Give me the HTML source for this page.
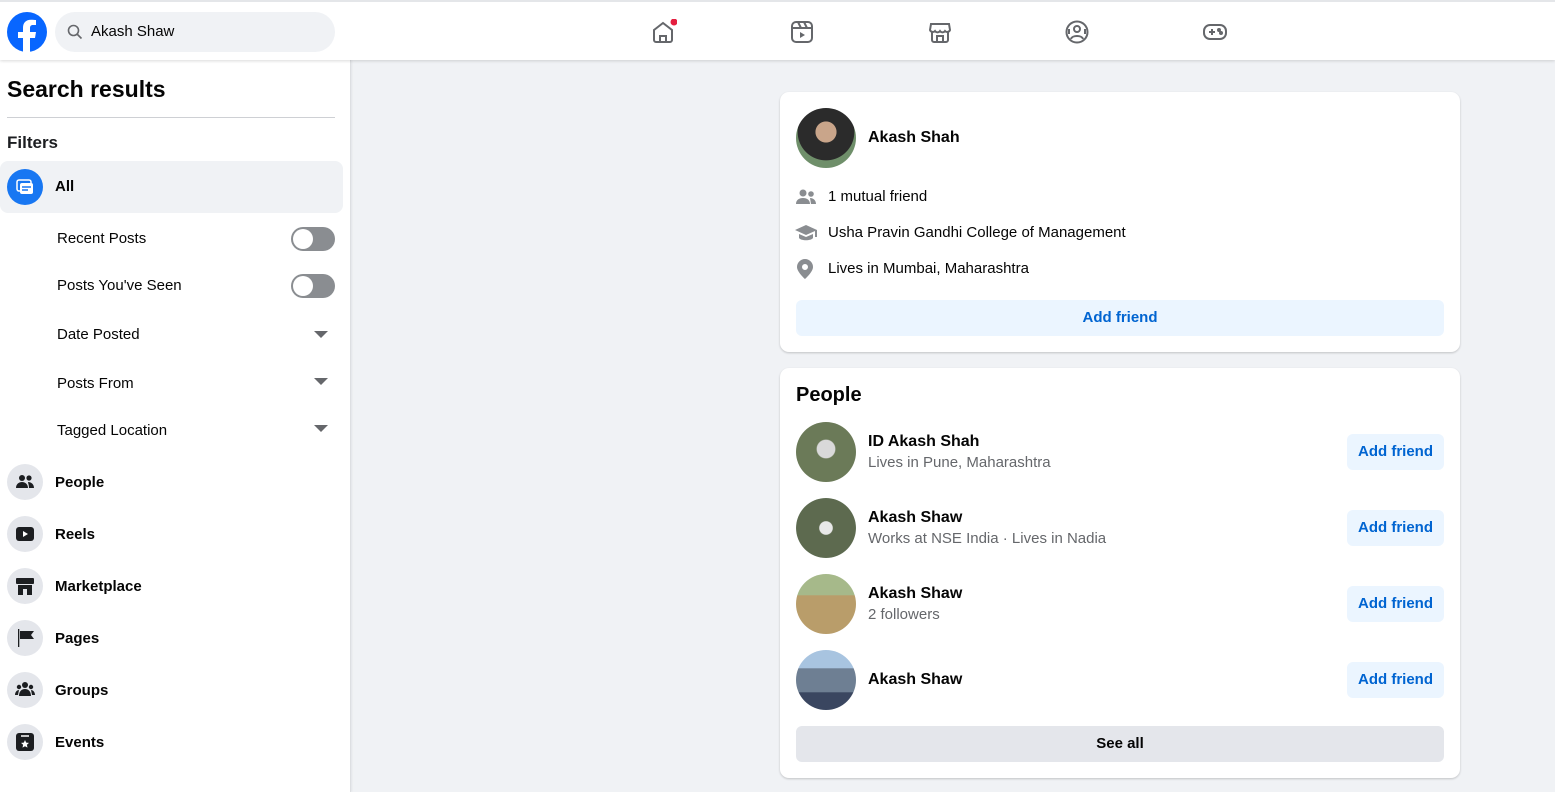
<!DOCTYPE html>
<html><head><meta charset="utf-8"><style>
*{box-sizing:border-box;margin:0;padding:0}
body{width:1555px;height:792px;overflow:hidden;background:#f0f2f5;font-family:"Liberation Sans",Arial,sans-serif;color:#050505;position:relative}
.hdr{position:absolute;left:0;top:0;width:1555px;height:60px;background:#fff;border-top:2px solid #e4e6e9;box-shadow:0 1px 3px rgba(0,0,0,.15);z-index:2}
.side{position:absolute;left:0;top:60px;width:351px;height:732px;background:#fff;border-right:1px solid #dddfe2;box-shadow:1px 0 2px rgba(0,0,0,.06)}
.abs{position:absolute}
.card{position:absolute;background:#fff;border-radius:9px;box-shadow:0 1px 2px rgba(0,0,0,.2)}
.circ{position:absolute;width:36px;height:36px;border-radius:50%;background:#e4e6eb;left:7px}
.lbl{position:absolute;left:55px;font-size:15px;font-weight:bold}
.flt{position:absolute;left:57px;font-size:15px}
.tog{position:absolute;left:291px;width:44px;height:24px;border-radius:12px;background:#8a8d91}
.tog::after{content:"";position:absolute;left:2px;top:2px;width:20px;height:20px;border-radius:50%;background:#fff}
.tri{position:absolute;left:314px;width:0;height:0;border-left:7px solid transparent;border-right:7px solid transparent;border-top:7px solid #65676b}
.btn{position:absolute;background:#ebf5ff;color:#0064d1;font-weight:bold;font-size:15px;border-radius:6px;text-align:center}
.av{position:absolute;width:60px;height:60px;border-radius:50%}
.nm{position:absolute;font-size:16px;font-weight:bold}
.sub{position:absolute;font-size:15px;color:#65676b}
</style></head><body>
<div class="hdr">
<svg class="abs" style="left:7px;top:10px" width="40" height="40" viewBox="0 0 40 40"><circle cx="20" cy="20" r="20" fill="#0866ff"/><path d="M23 40V26h5l1-6h-6v-4c0-2 1-3 3-3h3V8c-1 0-3-.3-5-.3-5 0-8 3-8 8V20h-5v6h5v14z" fill="#fff"/></svg>
<div class="abs" style="left:55px;top:10px;width:280px;height:40px;border-radius:20px;background:#f0f2f5"></div>
<svg class="abs" style="left:67px;top:22px" width="16" height="16" viewBox="0 0 16 16"><circle cx="6.5" cy="6.5" r="5" fill="none" stroke="#65676b" stroke-width="1.6"/><path d="M10 10l4.5 4.5" stroke="#65676b" stroke-width="1.6"/></svg>
<div class="abs" style="left:91px;top:21px;font-size:15px">Akash Shaw</div>
<svg class="abs" style="left:651px;top:17px" width="26" height="26" viewBox="0 0 26 26" fill="none" stroke="#65676b" stroke-width="2"><path d="M3 11L12 4l9 7v10a2 2 0 0 1-2 2H5a2 2 0 0 1-2-2z"/><path d="M9 23v-6h6v6"/><circle cx="23" cy="3" r="3.5" fill="#e41e3f" stroke="none"/></svg>
<svg class="abs" style="left:790px;top:18px" width="24" height="24" viewBox="0 0 24 24" fill="none" stroke="#65676b" stroke-width="2"><rect x="2" y="2" width="20" height="20" rx="4"/><path d="M2 8h20M8 2l3 6M14 2l3 6"/><path d="M10 12v6l5-3z" fill="#65676b" stroke="none"/></svg>
<svg class="abs" style="left:928px;top:18px" width="24" height="24" viewBox="0 0 24 24" fill="none" stroke="#65676b" stroke-width="2"><path d="M3 4h18l1 6a3 3 0 0 1-5 1 3 3 0 0 1-5 0 3 3 0 0 1-5 0 3 3 0 0 1-5-1z"/><path d="M4 12v8a2 2 0 0 0 2 2h12a2 2 0 0 0 2-2v-8M9 22v-6h6v6"/></svg>
<svg class="abs" style="left:1065px;top:18px" width="24" height="24" viewBox="0 0 24 24" fill="none" stroke="#65676b" stroke-width="2"><circle cx="12" cy="12" r="10.5"/><circle cx="12" cy="9" r="3"/><path d="M6 19c1-4 11-4 12 0M4 9v5M20 9v5"/></svg>
<svg class="abs" style="left:1203px;top:20px" width="24" height="20" viewBox="0 0 24 20" fill="none" stroke="#65676b" stroke-width="2"><rect x="1" y="3" width="22" height="14" rx="6"/><path d="M6 10h6M9 7v6"/><circle cx="16" cy="8" r="1" fill="#65676b"/><circle cx="18" cy="11" r="1" fill="#65676b"/></svg>
</div>
<div class="side">
<div class="abs" style="left:7px;top:16px;font-size:23px;font-weight:bold">Search results</div>
<div class="abs" style="left:7px;top:57px;width:328px;height:1px;background:#ced0d4"></div>
<div class="abs" style="left:7px;top:73px;font-size:17px;font-weight:bold;color:#1c1e21">Filters</div>
<div class="abs" style="left:0;top:101px;width:343px;height:52px;background:#f0f2f5;border-radius:8px"></div>
<div class="circ" style="top:109px;background:#1877f2"></div>
<svg class="abs" style="left:15px;top:117px" width="20" height="20" viewBox="0 0 20 20"><rect x="2" y="3" width="14" height="11" rx="2" fill="none" stroke="#fff" stroke-width="1.5"/><rect x="5" y="6" width="13" height="11" rx="2" fill="#fff"/><path d="M7 10h9M7 13h6" stroke="#1877f2" stroke-width="1.5"/></svg>
<div class="lbl" style="top:118px">All</div>
<div class="flt" style="top:170px">Recent Posts</div><div class="tog" style="top:167px"></div>
<div class="flt" style="top:217px">Posts You've Seen</div><div class="tog" style="top:214px"></div>
<div class="flt" style="top:266px">Date Posted</div><div class="tri" style="top:271px"></div>
<div class="flt" style="top:315px">Posts From</div><div class="tri" style="top:318px"></div>
<div class="flt" style="top:362px">Tagged Location</div><div class="tri" style="top:365px"></div>
<div class="circ" style="top:404px"></div><div class="lbl" style="top:414px">People</div>
<svg class="abs" style="left:16px;top:414px" width="18" height="16" viewBox="0 0 18 16" fill="#1c1e21"><circle cx="6" cy="4" r="3"/><circle cx="13" cy="4" r="2.6"/><path d="M0 14c0-4 3-6 6-6s6 2 6 6zM12 8c3 0 6 2 6 6h-5c0-3-1-5-1-6z"/></svg>
<div class="circ" style="top:456px"></div><div class="lbl" style="top:466px">Reels</div>
<svg class="abs" style="left:16px;top:467px" width="18" height="14" viewBox="0 0 18 14"><rect width="18" height="14" rx="3" fill="#1c1e21"/><path d="M7 4v6l5-3z" fill="#fff"/></svg>
<div class="circ" style="top:508px"></div><div class="lbl" style="top:518px">Marketplace</div>
<svg class="abs" style="left:16px;top:517px" width="18" height="18" viewBox="0 0 18 18" fill="#1c1e21"><rect x="0" y="1" width="18" height="6" rx="1"/><path d="M2 8h14v10H11v-6H7v6H2z"/></svg>
<div class="circ" style="top:560px"></div><div class="lbl" style="top:570px">Pages</div>
<svg class="abs" style="left:17px;top:569px" width="17" height="18" viewBox="0 0 17 18" fill="#1c1e21"><rect x="1" y="0" width="1.3" height="18"/><path d="M3 2h14l-3 4 3 4H3z"/></svg>
<div class="circ" style="top:612px"></div><div class="lbl" style="top:622px">Groups</div>
<svg class="abs" style="left:15px;top:622px" width="20" height="14" viewBox="0 0 20 14" fill="#1c1e21"><circle cx="10" cy="3" r="3"/><circle cx="4" cy="5" r="2.2"/><circle cx="16" cy="5" r="2.2"/><path d="M4 14c0-5 3-7 6-7s6 2 6 7zM0 13c0-3 2-5 4-5l-1 5zM20 13c0-3-2-5-4-5l1 5z"/></svg>
<div class="circ" style="top:664px"></div><div class="lbl" style="top:674px">Events</div>
<svg class="abs" style="left:16px;top:673px" width="18" height="18" viewBox="0 0 18 18"><rect width="18" height="18" rx="3" fill="#1c1e21"/><path d="M5 3h8" stroke="#fff" stroke-width="1.5"/><path d="M9 7l1.2 2.6 2.8.3-2.1 1.9.6 2.8L9 13.2l-2.5 1.4.6-2.8-2.1-1.9 2.8-.3z" fill="#fff"/></svg>
</div>

<div class="card" style="left:780px;top:92px;width:680px;height:260px">
<div class="av" style="left:16px;top:16px;background:radial-gradient(circle at 50% 40%,#c9a58a 0 22%,#2b2b2b 23% 60%,#6f8f6a 61%)"></div>
<div class="nm" style="left:88px;top:37px">Akash Shah</div>
<svg class="abs" style="left:16px;top:97px" width="20" height="16" viewBox="0 0 20 16" fill="#8a8d91"><circle cx="7" cy="4" r="3.5"/><circle cx="15" cy="5" r="2.8"/><path d="M0 15c0-4 3-6 7-6s7 2 7 6zM14 9c3 0 6 2 6 6h-5z"/></svg>
<div class="abs" style="left:48px;top:96px;font-size:15px">1 mutual friend</div>
<svg class="abs" style="left:15px;top:132px" width="22" height="18" viewBox="0 0 22 18" fill="#8a8d91"><path d="M11 1L0 6l11 5 9-4v6h2V6z"/><path d="M4 10v4c2 3 12 3 14 0v-4l-7 3z"/></svg>
<div class="abs" style="left:48px;top:132px;font-size:15px">Usha Pravin Gandhi College of Management</div>
<svg class="abs" style="left:17px;top:167px" width="16" height="20" viewBox="0 0 16 20" fill="#8a8d91"><path d="M8 0a8 8 0 0 0-8 8c0 5 8 12 8 12s8-7 8-12a8 8 0 0 0-8-8zm0 11a3 3 0 1 1 0-6 3 3 0 0 1 0 6z"/></svg>
<div class="abs" style="left:48px;top:168px;font-size:15px">Lives in Mumbai, Maharashtra</div>
<div class="btn" style="left:16px;top:208px;width:648px;height:36px;line-height:36px">Add friend</div>
</div>

<div class="card" style="left:780px;top:368px;width:680px;height:410px">
<div class="abs" style="left:16px;top:16px;font-size:20px;font-weight:bold">People</div>
<div class="av" style="left:16px;top:54px;background:radial-gradient(circle at 50% 45%,#d9d9d9 0 20%,#6b7a58 22%)"></div>
<div class="nm" style="left:88px;top:65px">ID Akash Shah</div>
<div class="sub" style="left:88px;top:86px">Lives in Pune, Maharashtra</div>
<div class="btn" style="left:567px;top:66px;width:97px;height:36px;line-height:36px">Add friend</div>
<div class="av" style="left:16px;top:130px;background:radial-gradient(circle at 50% 50%,#e8e8e8 0 15%,#5d6a4f 17% 70%,#8a9a8a 71%)"></div>
<div class="nm" style="left:88px;top:141px">Akash Shaw</div>
<div class="sub" style="left:88px;top:162px">Works at NSE India · Lives in Nadia</div>
<div class="btn" style="left:567px;top:142px;width:97px;height:36px;line-height:36px">Add friend</div>
<div class="av" style="left:16px;top:206px;background:linear-gradient(#a6b98a 0 35%,#b99d6a 36%)"></div>
<div class="nm" style="left:88px;top:217px">Akash Shaw</div>
<div class="sub" style="left:88px;top:238px">2 followers</div>
<div class="btn" style="left:567px;top:218px;width:97px;height:36px;line-height:36px">Add friend</div>
<div class="av" style="left:16px;top:282px;background:linear-gradient(#a8c4e0 0 30%,#6e7f93 31% 70%,#3a4660 71%)"></div>
<div class="nm" style="left:88px;top:303px">Akash Shaw</div>
<div class="btn" style="left:567px;top:294px;width:97px;height:36px;line-height:36px">Add friend</div>
<div class="abs" style="left:16px;top:358px;width:648px;height:36px;line-height:36px;background:#e4e6eb;border-radius:6px;text-align:center;font-size:15px;font-weight:bold;color:#050505">See all</div>
</div>
</body></html>
